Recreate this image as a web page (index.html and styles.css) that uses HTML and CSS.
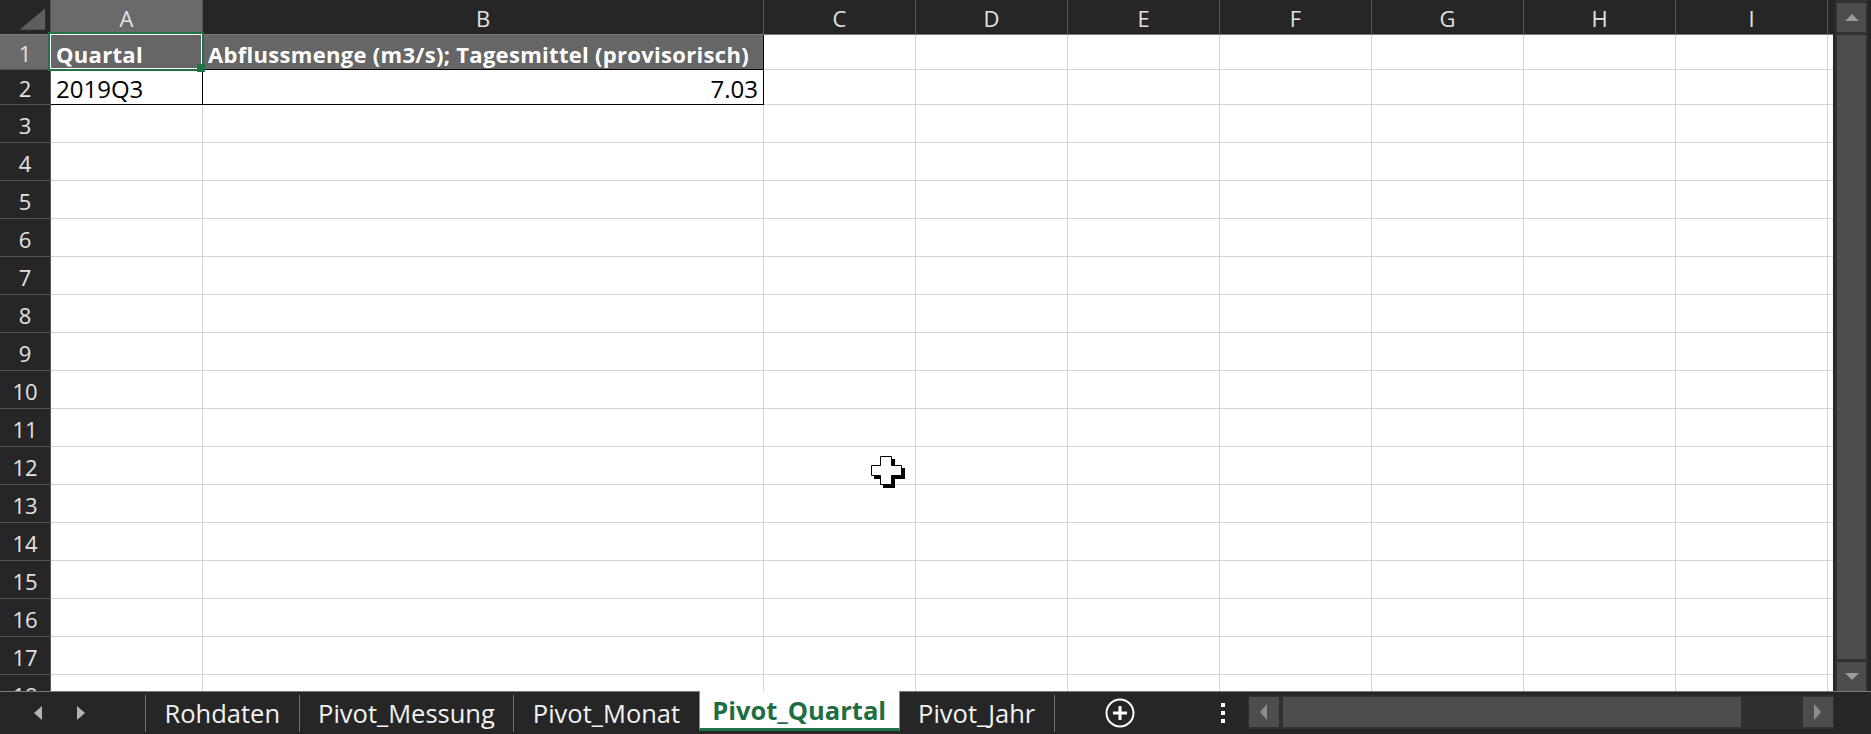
FILE: index.html
```html
<!DOCTYPE html>
<html lang="de">
<head>
  <meta charset="UTF-8">
  <title>Pivot_Quartal</title>
  <link rel="stylesheet" href="styles.css">
</head>
<body>

<div class="app">
  <div class="main">
    <div class="sheet">
      <div class="grid" id="grid">
        <div class="corner">
          <svg width="51" height="35" viewBox="0 0 51 35"><polygon points="46,8 46,30 20,30" fill="#5e5e5e"/></svg>
        </div>
        <div class="col-head sel">A</div>
        <div class="col-head">B</div>
        <div class="col-head">C</div>
        <div class="col-head">D</div>
        <div class="col-head">E</div>
        <div class="col-head">F</div>
        <div class="col-head">G</div>
        <div class="col-head">H</div>
        <div class="col-head">I</div>
        <div class="col-head tail"></div>

        <div class="row-head sel">1</div>
        <div class="cell th">Quartal</div>
        <div class="cell th">Abflussmenge (m3/s); Tagesmittel (provisorisch)</div>
        <div class="cell"></div><div class="cell"></div><div class="cell"></div><div class="cell"></div>
        <div class="cell"></div><div class="cell"></div><div class="cell"></div><div class="cell tail"></div>

        <div class="row-head">2</div>
        <div class="cell td">2019Q3</div>
        <div class="cell td num">7.03</div>
        <div class="cell"></div><div class="cell"></div><div class="cell"></div><div class="cell"></div>
        <div class="cell"></div><div class="cell"></div><div class="cell"></div><div class="cell tail"></div>
      </div>

      <div class="selection"></div>
      <div class="handle"></div>

      <svg class="cursor" width="34" height="32" viewBox="0 0 34 32">
        <path d="M12 3 H24 V12 H34 V23 H24 V32 H12 V23 H3 V12 H12 Z" fill="#000"/>
        <path d="M9.5 0.5 H20.5 V9.5 H30.5 V19.5 H20.5 V28.5 H9.5 V19.5 H0.5 V9.5 H9.5 Z" fill="#fff" stroke="#000" stroke-width="1"/>
      </svg>
    </div>

    <div class="vscroll">
      <div class="vtrack">
        <div class="sbtn"><span class="tri-up"></span></div>
        <div class="vthumb"></div>
        <div class="sbtn"><span class="tri-down"></span></div>
      </div>
    </div>
  </div>

  <div class="tabbar">
    <div class="nav">
      <span class="arrow-left"></span>
      <span class="arrow-right"></span>
    </div>
    <div class="sep"></div>
    <div class="tab">Rohdaten</div>
    <div class="sep"></div>
    <div class="tab">Pivot_Messung</div>
    <div class="sep"></div>
    <div class="tab">Pivot_Monat</div>
    <div class="tab active">Pivot_Quartal</div>
    <div class="tab">Pivot_Jahr</div>
    <div class="sep"></div>

    <svg class="plus" width="30" height="30" viewBox="0 0 30 30">
      <circle cx="15" cy="15" r="13.5" fill="none" stroke="#fff" stroke-width="2"/>
      <path d="M15 8 V22 M8 15 H22" stroke="#fff" stroke-width="3"/>
    </svg>

    <div class="more"><span></span><span></span><span></span></div>

    <div class="hscroll">
      <div class="hbtn"><span class="tri-left"></span></div>
      <div class="hthumb"></div>
      <div class="hbtn last"><span class="tri-right"></span></div>
    </div>
  </div>
</div>

<script>
  const grid = document.getElementById('grid');

  for (let r = 3; r <= 18; r++) {
    const head = document.createElement('div');
    head.className = 'row-head';
    head.textContent = r;
    grid.appendChild(head);
    for (let c = 0; c < 10; c++) {
      const cell = document.createElement('div');
      cell.className = c === 9 ? 'cell tail' : 'cell';
      grid.appendChild(cell);
    }
  }
</script>

</body>
</html>
```

FILE: styles.css
```css
body {
  margin: 0;
  background: #262626;
  font-family: "Open Sans", "Noto Sans", sans-serif;
  overflow: hidden;
}
.app {
  width: 1871px;
  height: 734px;
  display: flex;
  flex-direction: column;
}
.main {
  display: flex;
  height: 691px;
}

/* sheet grid */
.sheet {
  position: relative;
  width: 1833px;
  height: 691px;
  overflow: hidden;
  background: #fff;
}
.grid {
  display: grid;
  grid-template-columns: 51px 152px 561px repeat(7, 152px) 1fr;
  grid-template-rows: 35px 35px 35px repeat(16, 38px);
}
.grid > div {
  box-sizing: border-box;
  display: flex;
  align-items: center;
  white-space: nowrap;
}
.corner {
  background: #262626;
  border-right: 1px solid #555;
  border-bottom: 1px solid #7a7a7a;
}
.col-head,
.row-head {
  background: #262626;
  color: #e2e2e2;
  font-size: 22px;
  justify-content: center;
  border-right: 1px solid #555;
}
.col-head {
  border-bottom: 1px solid #7a7a7a;
  padding-top: 2px;
}
.row-head {
  border-bottom: 1px solid #555;
  padding-top: 2px;
}
.col-head.tail {
  border-right: none;
}
.sel {
  background: #6a6a6a;
}
.cell {
  font-size: 24px;
  color: #000;
  padding: 3px 5px 0;
  border-right: 1px solid #d4d4d4;
  border-bottom: 1px solid #d4d4d4;
}
.cell.tail {
  border-right: none;
}
.cell.th {
  background: #666;
  color: #fff;
  font-size: 22px;
  font-weight: 700;
  letter-spacing: 0.3px;
  border-right-color: #000;
  border-bottom-color: #000;
  overflow: visible;
}
.cell.td {
  border-right-color: #000;
  border-bottom-color: #000;
}
.cell.num {
  justify-content: flex-end;
}

.selection {
  position: absolute;
  left: 48px;
  top: 32px;
  width: 156px;
  height: 39px;
  box-sizing: border-box;
  border: 2px solid #217346;
  box-shadow: inset 0 0 0 1px #fff;
}
.handle {
  position: absolute;
  left: 197px;
  top: 64px;
  width: 8px;
  height: 8px;
  background: #217346;
}
.cursor {
  position: absolute;
  left: 871px;
  top: 456px;
}

/* vertical scrollbar */
.vscroll {
  width: 38px;
  background: #262626;
}
.vtrack {
  margin-left: 2px;
  width: 33px;
  height: 691px;
  box-sizing: border-box;
  padding: 3px 2px 0;
  background: #303030;
  display: flex;
  flex-direction: column;
  gap: 3px;
}
.sbtn {
  height: 29px;
  background: #4d4d4d;
  display: flex;
  align-items: center;
  justify-content: center;
}
.vthumb {
  flex: 1;
  background: #4d4d4d;
}
.tri-up {
  border-left: 7px solid transparent;
  border-right: 7px solid transparent;
  border-bottom: 7px solid #9a9a9a;
}
.tri-down {
  border-left: 7px solid transparent;
  border-right: 7px solid transparent;
  border-top: 7px solid #9a9a9a;
}

/* sheet tabs */
.tabbar {
  height: 43px;
  box-sizing: border-box;
  border-top: 1px solid #7a7a7a;
  background: #262626;
  display: flex;
  align-items: stretch;
}
.nav {
  width: 145px;
  box-sizing: border-box;
  padding-left: 34px;
  display: flex;
  align-items: center;
  gap: 35px;
}
.arrow-left {
  border-top: 7px solid transparent;
  border-bottom: 7px solid transparent;
  border-right: 8px solid #b4b4b4;
}
.arrow-right {
  border-top: 7px solid transparent;
  border-bottom: 7px solid transparent;
  border-left: 8px solid #b4b4b4;
}
.sep {
  width: 1px;
  background: #6e6e6e;
  margin: 3px 0 2px;
}
.tab {
  display: flex;
  align-items: center;
  padding: 0 18.5px;
  font-size: 25.5px;
  color: #f2f2f2;
}
.tab.active {
  margin-top: -1px;
  margin-bottom: 3px;
  padding: 0 12.5px;
  background: #fff;
  color: #1e6e42;
  font-size: 25.5px;
  font-weight: 700;
  border-left: 1px solid #8a8a8a;
  border-right: 1px solid #8a8a8a;
  border-bottom: 3px solid #217346;
}
.plus {
  align-self: center;
  margin-left: 50px;
}
.more {
  margin-left: 86px;
  display: flex;
  flex-direction: column;
  justify-content: center;
  gap: 4px;
}
.more span {
  width: 4px;
  height: 4px;
  background: #fff;
}
.hscroll {
  margin: 3px 0 0 23px;
  width: 586px;
  height: 34px;
  box-sizing: border-box;
  padding: 2px 1px;
  background: #303030;
  display: flex;
  gap: 4px;
}
.hbtn {
  width: 30px;
  background: #4d4d4d;
  display: flex;
  align-items: center;
  justify-content: center;
}
.hbtn.last {
  margin-left: auto;
}
.hthumb {
  width: 458px;
  background: #4d4d4d;
}
.tri-left {
  border-top: 8px solid transparent;
  border-bottom: 8px solid transparent;
  border-right: 7px solid #8c8c8c;
}
.tri-right {
  border-top: 8px solid transparent;
  border-bottom: 8px solid transparent;
  border-left: 7px solid #8c8c8c;
}
```
